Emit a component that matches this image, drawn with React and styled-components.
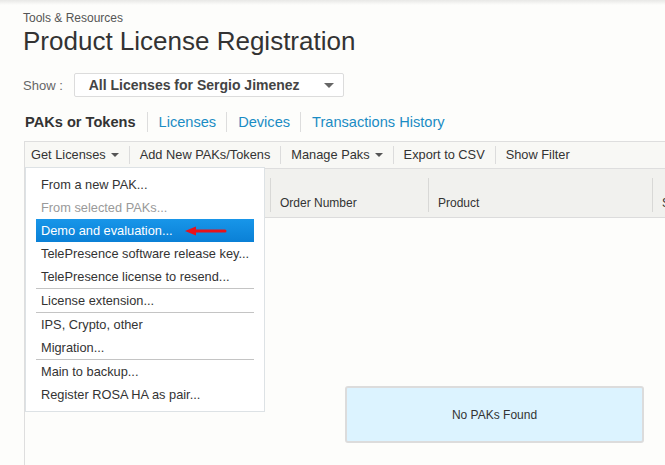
import React from 'react';
import styled, { createGlobalStyle } from 'styled-components';

const GlobalStyle = createGlobalStyle`
  html, body {
    margin: 0;
    padding: 0;
    background: #fdfdfb;
    overflow: hidden;
  }
  body {
    font-family: "Liberation Sans", Arial, sans-serif;
    color: #333;
  }
`

const Page = styled.div`
  width: 665px;
  height: 465px;
  padding-left: 23px;
  box-sizing: border-box;
  background: linear-gradient(#e8e8e6 0, #fdfdfb 5px);
`

const Breadcrumb = styled.div`
  padding-top: 11px;
  font-size: 12px;
  line-height: 14px;
  color: #555;
`

const Title = styled.h1`
  margin: 1px 0 0;
  font-size: 26px;
  font-weight: normal;
  line-height: 30px;
  color: #333;
`

const ShowRow = styled.div`
  display: flex;
  align-items: center;
  gap: 11px;
  margin-top: 17px;
  height: 24px;
`

const ShowLabel = styled.span`
  font-size: 13px;
  color: #666;
`

const Select = styled.div`
  width: 270px;
  height: 24px;
  box-sizing: border-box;
  border: 1px solid #dcdcdc;
  border-radius: 2px;
  background: #fff;
  display: flex;
  align-items: center;
  justify-content: space-between;
  padding: 0 9px 0 14px;
  font-size: 14px;
  font-weight: bold;
  color: #444;
`

const Caret = styled.span`
  display: inline-block;
  width: 0;
  height: 0;
  border-left: ${p => p.size}px solid transparent;
  border-right: ${p => p.size}px solid transparent;
  border-top: ${p => p.size}px solid ${p => p.color || '#666'};
  margin-left: ${p => p.gap || 0}px;
  vertical-align: middle;
`

const Tabs = styled.div`
  display: flex;
  align-items: center;
  margin-top: 15px;
  height: 20px;
`

const Tab = styled.span`
  font-size: 14.6px;
  line-height: 20px;
  padding: 0 10px 0 11px;
  color: ${p => (p.active ? '#333' : '#1a8cc4')};
  font-weight: ${p => (p.active ? 'bold' : 'normal')};
  border-left: ${p => (p.active ? 'none' : '1px solid #ddd')};

  &:first-child {
    padding-left: 2px;
    padding-right: 11px;
  }
`

const GridArea = styled.div`
  position: relative;
  margin-top: 9px;
  margin-left: 1px;
  width: 940px;
`

const Toolbar = styled.div`
  display: flex;
  align-items: center;
  height: 28px;
  box-sizing: border-box;
  border: 1px solid #dedede;
  background: #f8f8f5;
`

const ToolButton = styled.span`
  display: flex;
  align-items: center;
  font-size: 12.8px;
  color: #333;
  line-height: 18px;
  padding: 0 10px;
  border-left: 1px solid #dcdcdc;

  &:first-child {
    border-left: none;
    padding-left: 6px;
    padding-right: 10px;
  }
`

const Grid = styled.div`
  border-left: 1px solid #dedede;
  height: 300px;
`

const HeaderRow = styled.div`
  display: flex;
  height: 49px;
  background: #f1f1ee;
  border-bottom: 1px solid #dcdcdc;
  box-sizing: border-box;
`

const HeaderCell = styled.div`
  width: ${p => p.width}px;
  flex: none;
  display: flex;
  align-items: flex-end;
  padding: 0 0 7px 10px;
  box-sizing: border-box;
  font-size: 12px;
  color: #333;
  position: relative;

  &::before {
    content: '';
    display: ${p => (p.first ? 'none' : 'block')};
    position: absolute;
    left: 0;
    top: 9px;
    bottom: 5px;
    border-left: 1px solid #d8d8d6;
  }
`

const GridBody = styled.div`
  padding-top: 168px;
  display: flex;
  justify-content: center;
`

const EmptyNotice = styled.div`
  width: 299px;
  height: 57px;
  box-sizing: border-box;
  border: 2px solid #dcdcdc;
  border-radius: 3px;
  background: #dcf3ff;
  display: flex;
  align-items: center;
  justify-content: center;
  font-size: 12px;
  color: #333;
`

const Menu = styled.div`
  position: absolute;
  top: 26px;
  left: 1px;
  width: 240px;
  box-sizing: border-box;
  padding: 5px 10px;
  background: #fff;
  border: 1px solid #dde2e5;
  z-index: 2;
`

const MenuItem = styled.div`
  display: flex;
  align-items: center;
  height: 23px;
  padding-left: 5px;
  font-size: 12.8px;
  white-space: nowrap;
  color: ${p => (p.disabled ? '#9a9a9a' : p.active ? '#fff' : '#333')};
  background: ${p => (p.active ? 'linear-gradient(#1896e9, #0a80d6)' : 'transparent')};
`

const MenuDivider = styled.div`
  height: 1px;
  background: #c4c4c4;
`

const Arrow = () => (
  <svg width="42" height="10" viewBox="0 0 42 10" style={{ marginLeft: 12 }}>
    <line x1="9" y1="5" x2="40" y2="5" stroke="#e8121a" strokeWidth="3" strokeLinecap="round" />
    <polygon points="0,5 11,0.5 11,9.5" fill="#e8121a" />
  </svg>
)

const menuGroups = [
  [
    { label: 'From a new PAK...' },
    { label: 'From selected PAKs...', disabled: true },
    { label: 'Demo and evaluation...', active: true },
    { label: 'TelePresence software release key...' },
    { label: 'TelePresence license to resend...' },
  ],
  [{ label: 'License extension...' }],
  [{ label: 'IPS, Crypto, other' }, { label: 'Migration...' }],
  [{ label: 'Main to backup...' }, { label: 'Register ROSA HA as pair...' }],
]

const App = () => {
  return (
    <Page>
      <GlobalStyle />
      <Breadcrumb>Tools &amp; Resources</Breadcrumb>
      <Title>Product License Registration</Title>

      <ShowRow>
        <ShowLabel>Show :</ShowLabel>
        <Select>
          All Licenses for Sergio Jimenez
          <Caret size={5} color="#666" />
        </Select>
      </ShowRow>

      <Tabs>
        <Tab active>PAKs or Tokens</Tab>
        <Tab>Licenses</Tab>
        <Tab>Devices</Tab>
        <Tab>Transactions History</Tab>
      </Tabs>

      <GridArea>
        <Toolbar>
          <ToolButton>
            Get Licenses <Caret size={4} color="#555" gap={5} />
          </ToolButton>
          <ToolButton>Add New PAKs/Tokens</ToolButton>
          <ToolButton>
            Manage Paks <Caret size={4} color="#555" gap={5} />
          </ToolButton>
          <ToolButton>Export to CSV</ToolButton>
          <ToolButton>Show Filter</ToolButton>
        </Toolbar>

        <Grid>
          <HeaderRow>
            <HeaderCell first width={245} />
            <HeaderCell width={158}>Order Number</HeaderCell>
            <HeaderCell width={224}>Product</HeaderCell>
            <HeaderCell width={200}>Status</HeaderCell>
          </HeaderRow>
          <GridBody>
            <EmptyNotice>No PAKs Found</EmptyNotice>
          </GridBody>
        </Grid>

        <Menu>
          {menuGroups.map((group, gi) => (
            <React.Fragment key={gi}>
              {gi > 0 && <MenuDivider />}
              {group.map(item => (
                <MenuItem key={item.label} disabled={item.disabled} active={item.active}>
                  {item.label}
                  {item.active && <Arrow />}
                </MenuItem>
              ))}
            </React.Fragment>
          ))}
        </Menu>
      </GridArea>
    </Page>
  );
};

export default App;
